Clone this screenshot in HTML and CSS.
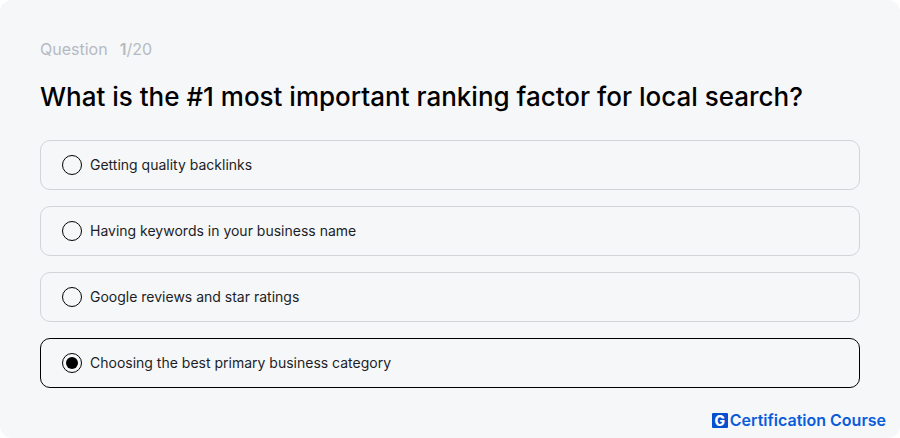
FILE: index.html
```html
<!DOCTYPE html>
<html lang="en">
<head>
<meta charset="utf-8">
<meta name="viewport" content="width=device-width, initial-scale=1">
<title>Certification Course</title>
<link rel="stylesheet" href="styles.css">
</head>
<body>
<main class="card">
  <p class="progress"><span>Question</span><span><b>1</b>/20</span></p>
  <h1 class="question" id="question">What is the #1 most important ranking factor for local search?</h1>
  <form class="options" role="radiogroup" aria-labelledby="question">
    <label class="option"><input class="radio" type="radio" name="answer">Getting quality backlinks</label>
    <label class="option"><input class="radio" type="radio" name="answer">Having keywords in your business name</label>
    <label class="option"><input class="radio" type="radio" name="answer">Google reviews and star ratings</label>
    <label class="option"><input class="radio" type="radio" name="answer" checked>Choosing the best primary business category</label>
  </form>
  <footer class="brand"><span class="brand-mark">G</span><span>Certification Course</span></footer>
</main>
</body>
</html>
```
FILE: styles.css
```css
* {
  box-sizing: border-box;
}

body {
  margin: 0;
  background: #fff;
  font-family: Inter, "Liberation Sans", sans-serif;
}

.card {
  display: flex;
  flex-direction: column;
  min-height: 100vh;
  padding: 39px 40px 8px;
  border-radius: 12px;
  background: #f6f7f9;
}

.progress {
  display: flex;
  gap: 12px;
  margin: 0;
  font-size: 16px;
  line-height: 20px;
  color: #b5bac2;
}

.progress b {
  font-weight: 600;
}

.question {
  margin: 20px 0 25px;
  font-size: 26px;
  font-weight: 500;
  line-height: 36px;
  color: #000;
}

.options {
  display: grid;
  gap: 16px;
}

.option {
  display: flex;
  align-items: center;
  gap: 8px;
  min-height: 50px;
  padding: 0 21px;
  border: 1px solid #d1d4d9;
  border-radius: 10px;
  font-size: 14px;
  line-height: 20px;
  color: #1c1e26;
}

.option:has(:checked) {
  border-color: #000;
}

.radio {
  appearance: none;
  flex: none;
  width: 20px;
  height: 20px;
  margin: 0;
  border: 1px solid #000;
  border-radius: 50%;
}

.radio:checked {
  padding: 3px;
  background: #000 content-box;
}

.brand {
  display: flex;
  justify-content: flex-end;
  align-items: center;
  gap: 2px;
  margin: auto -26px 0 0;
  font-size: 16px;
  font-weight: 600;
  line-height: 20px;
  color: #0b5cdb;
}

.brand-mark {
  width: 16px;
  border-radius: 1px;
  background: #0650cf;
  font-size: 14px;
  font-weight: 800;
  line-height: 15px;
  text-align: center;
  color: #fff;
}
```
